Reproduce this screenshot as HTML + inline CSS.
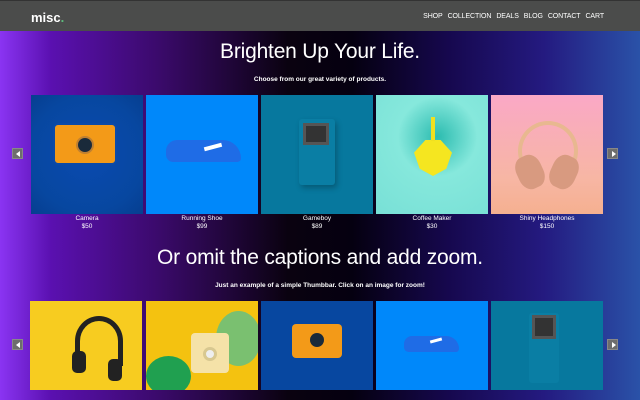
<!DOCTYPE html>
<html><head><meta charset="utf-8"><style>
*{margin:0;padding:0;box-sizing:border-box}
body{width:640px;height:400px;overflow:hidden;font-family:"Liberation Sans",sans-serif;color:#fff;position:relative;
background:linear-gradient(90deg,#8a34f2 0%,#5a10b0 8%,#3a0a6a 25%,#0a0210 45%,#050010 55%,#16084e 70%,#241a80 85%,#2a52a8 100%);}
.nav{position:absolute;left:0;top:0;width:640px;height:31px;background:#4b4c4b;border-top:1px solid #333}
.logo{position:absolute;left:31px;top:9px;font-weight:bold;font-size:13px}
.logo span{color:#5cbc7c}
.menu{position:absolute;right:36px;top:12px;font-size:7px;letter-spacing:-0.1px}
.menu span{margin-left:5px}
h1{position:absolute;width:640px;text-align:center;font-weight:normal;font-size:21px;letter-spacing:-0.2px;font-family:"Liberation Sans",sans-serif}
.sub{position:absolute;width:640px;text-align:center;font-size:6.5px;font-weight:bold}
.t{position:absolute;width:112px;overflow:hidden}
.cap{position:absolute;width:112px;text-align:center;font-size:6.5px;line-height:8px}
.arr{position:absolute;width:11px;height:11px;background:#6d6d6d;border:1px solid #888}
.arr:after{content:"";position:absolute;top:2px;border-top:3px solid transparent;border-bottom:3px solid transparent}
.l:after{left:3px;border-right:4px solid #fff}
.r:after{left:4px;border-left:4px solid #fff}
</style></head><body>
<div class="nav"><div class="logo">misc<span>.</span></div>
<div class="menu"><span>SHOP</span><span>COLLECTION</span><span>DEALS</span><span>BLOG</span><span>CONTACT</span><span>CART</span></div></div>
<h1 style="top:40px">Brighten Up Your Life.</h1>
<div class="sub" style="top:76px">Choose from our great variety of products.</div>

<div class="t" style="left:31px;top:95px;height:119px;background:radial-gradient(circle at 50% 50%,#0a4ab0,#0747a0 70%,#063e90)">
<div style="position:absolute;left:22px;top:28px;width:64px;height:42px;background:#f39a18;border-radius:5px;border:2px solid #0b4aa8"></div>
<div style="position:absolute;left:45px;top:41px;width:18px;height:18px;border-radius:50%;background:#1a2a3a;border:2px solid #c08030"></div></div>
<div class="t" style="left:146px;top:95px;height:119px;background:#0088fa">
<div style="position:absolute;left:20px;top:45px;width:75px;height:22px;background:#1f6ce6;border-radius:12px 20px 4px 8px"></div>
<div style="position:absolute;left:58px;top:50px;width:18px;height:4px;background:#fff;transform:rotate(-15deg)"></div></div>
<div class="t" style="left:261px;top:95px;height:119px;background:#07789e">
<div style="position:absolute;left:38px;top:24px;width:36px;height:66px;background:#0a7ea4;border-radius:3px;box-shadow:2px 3px 6px rgba(0,0,0,.25)"></div>
<div style="position:absolute;left:42px;top:28px;width:26px;height:22px;background:#333;border:3px solid #555"></div></div>
<div class="t" style="left:376px;top:95px;height:119px;background:radial-gradient(circle at 55% 35%,#2cbcb0,#86e8dc 40%,#78e0d6)">
<div style="position:absolute;left:38px;top:45px;width:38px;height:36px;background:#f5e620;clip-path:polygon(30% 0,70% 0,100% 35%,85% 80%,50% 100%,15% 80%,0 35%)"></div>
<div style="position:absolute;left:55px;top:22px;width:4px;height:24px;background:#f0e020"></div></div>
<div class="t" style="left:491px;top:95px;height:119px;background:linear-gradient(180deg,#faa8c6,#f7b6a4 70%,#f5b090)">
<div style="position:absolute;left:27px;top:26px;width:60px;height:60px;border:4px solid #e8b890;border-radius:50%;border-bottom-color:transparent"></div>
<div style="position:absolute;left:26px;top:60px;width:26px;height:34px;background:#d89a80;border-radius:40%;transform:rotate(-25deg)"></div>
<div style="position:absolute;left:60px;top:60px;width:26px;height:34px;background:#d89a80;border-radius:40%;transform:rotate(25deg)"></div></div>

<div class="cap" style="left:31px;top:215px">Camera<br>$50</div>
<div class="cap" style="left:146px;top:215px">Running Shoe<br>$99</div>
<div class="cap" style="left:261px;top:215px">Gameboy<br>$89</div>
<div class="cap" style="left:376px;top:215px">Coffee Maker<br>$30</div>
<div class="cap" style="left:491px;top:215px">Shiny Headphones<br>$150</div>

<div class="arr l" style="left:12px;top:148px"></div>
<div class="arr r" style="left:607px;top:148px"></div>

<h1 style="top:246px">Or omit the captions and add zoom.</h1>
<div class="sub" style="top:282px">Just an example of a simple Thumbbar. Click on an image for zoom!</div>

<div class="t" style="left:30px;top:301px;height:89px;background:#f7cc20">
<div style="position:absolute;left:45px;top:15px;width:48px;height:50px;border:5px solid #222;border-radius:50% 50% 0 0;border-bottom:none"></div>
<div style="position:absolute;left:42px;top:50px;width:14px;height:22px;background:#222;border-radius:5px"></div>
<div style="position:absolute;left:78px;top:58px;width:14px;height:22px;background:#222;border-radius:5px"></div></div>
<div class="t" style="left:146px;top:301px;height:89px;background:#f4c210">
<div style="position:absolute;left:70px;top:10px;width:45px;height:55px;background:#7ac070;border-radius:50%"></div>
<div style="position:absolute;left:0;top:55px;width:45px;height:40px;background:#20a050;border-radius:50%"></div>
<div style="position:absolute;left:45px;top:32px;width:38px;height:40px;background:#f5e2a8;border-radius:4px"></div>
<div style="position:absolute;left:57px;top:46px;width:14px;height:14px;background:#eee;border-radius:50%;border:3px solid #d8c890"></div></div>
<div class="t" style="left:261px;top:301px;height:89px;background:#0747a0">
<div style="position:absolute;left:31px;top:23px;width:50px;height:34px;background:#f39a18;border-radius:4px"></div>
<div style="position:absolute;left:49px;top:32px;width:14px;height:14px;border-radius:50%;background:#1a2a3a"></div></div>
<div class="t" style="left:376px;top:301px;height:89px;background:#0088fa">
<div style="position:absolute;left:28px;top:35px;width:55px;height:16px;background:#1f6ce6;border-radius:10px 16px 4px 6px"></div>
<div style="position:absolute;left:54px;top:38px;width:12px;height:3px;background:#fff;transform:rotate(-15deg)"></div></div>
<div class="t" style="left:491px;top:301px;height:89px;background:#07789e">
<div style="position:absolute;left:38px;top:12px;width:30px;height:70px;background:#0a7ea4;border-radius:3px"></div>
<div style="position:absolute;left:41px;top:14px;width:24px;height:24px;background:#333;border:3px solid #555"></div></div>

<div class="arr l" style="left:12px;top:339px"></div>
<div class="arr r" style="left:607px;top:339px"></div>
</body></html>
